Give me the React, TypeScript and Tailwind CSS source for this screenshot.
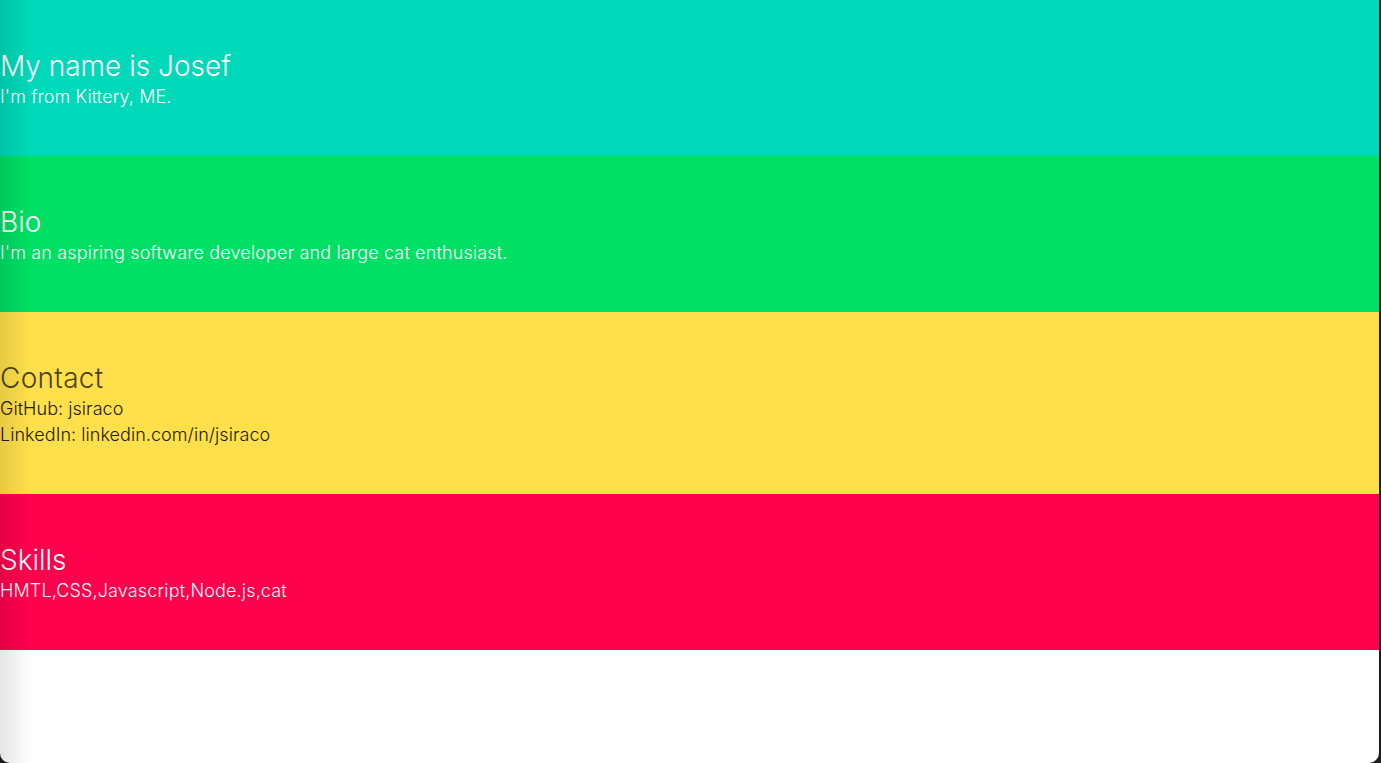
const sections = [
  {
    title: "My name is Josef",
    lines: ["I'm from Kittery, ME."],
    bg: "bg-[#00d9b9]",
    head: "text-white",
    body: "text-white tracking-[0.1px]",
  },
  {
    title: "Bio",
    lines: ["I'm an aspiring software developer and large cat enthusiast."],
    bg: "bg-[#00e065]",
    head: "text-white",
    body: "text-white tracking-[0.15px]",
  },
  {
    title: "Contact",
    lines: ["GitHub: jsiraco", "LinkedIn: linkedin.com/in/jsiraco"],
    bg: "bg-[#ffe04a]",
    head: "text-[#4d4418] tracking-[0.3px]",
    body: "text-[#1c1a0c] tracking-[0.05px]",
  },
  {
    title: "Skills",
    lines: ["HMTL,CSS,Javascript,Node.js,cat"],
    bg: "bg-[#ff004d]",
    head: "text-white",
    body: "text-white tracking-[0.15px]",
  },
];

export default function App() {
  return (
    <div className="h-[763px] w-full overflow-hidden bg-[#1e1e1e] pr-[2px]">
      <div
        className="relative h-full overflow-hidden rounded-b-[10px] bg-white"
        style={{ fontFamily: "Inter, 'Liberation Sans', sans-serif" }}
      >
        {sections.map((s) => (
          <section key={s.title} className={`${s.bg} pt-[49px] pb-[46px]`}>
            <h2 className={`${s.head} text-[28px] font-light leading-[35px]`}>
              {s.title}
            </h2>
            {s.lines.map((l) => (
              <p key={l} className={`${s.body} text-[18px] font-light leading-[26px]`}>
                {l}
              </p>
            ))}
          </section>
        ))}
        <div className="pointer-events-none absolute inset-y-0 left-0 w-[32px] bg-gradient-to-r from-black/10 to-transparent" />
      </div>
    </div>
  );
}
